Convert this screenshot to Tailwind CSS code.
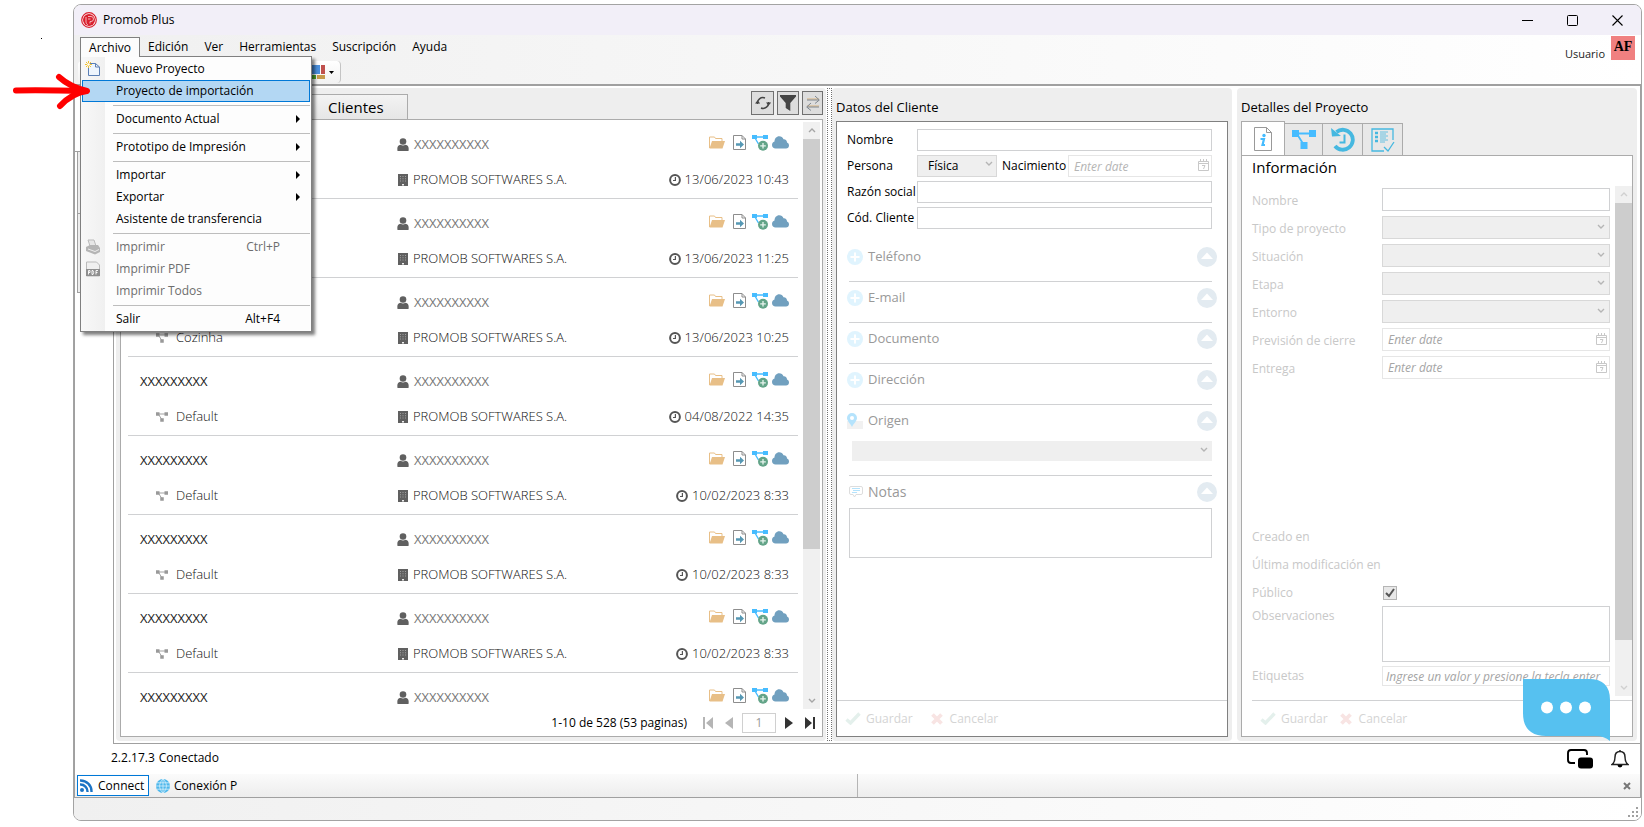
<!DOCTYPE html>
<html lang="es">
<head>
  <meta charset="UTF-8" />
  <meta name="viewport" content="width=device-width, initial-scale=1" />
  <title>Promob Plus</title>
  <script src="https://cdn.jsdelivr.net/npm/@tailwindcss/browser@4"></script>
</head>
<body class="bg-white h-screen overflow-hidden pl-[73px] pr-0.5 pt-1 pb-1.5 text-xs text-black font-['Open_Sans','Noto_Sans',sans-serif]">

  <!-- icon sprite -->
  <svg class="hidden">
    <symbol id="i-user" viewBox="0 0 12 13"><circle cx="6" cy="3.500" r="3.300"/><path d="M0.500 13c-.6-4 .2-6 3-6.300 1.500 1 3.500 1 5 0 2.800.3 3.600 2.300 3 6.300z"/></symbol>
    <symbol id="i-building" viewBox="0 0 10 12"><path d="M0 0h10v12H0z"/><path d="M2 2h1v1H2zM4.500 2h1v1h-1zM7 2h1v1H7zM2 4.200h1v1H2zM4.500 4.200h1v1h-1zM7 4.200h1v1H7zM2 6.400h1v1H2zM4.500 6.400h1v1h-1zM7 6.400h1v1H7z" fill="#a0a0a0"/><path d="M4 10h2v1.500H4z" fill="#eee"/></symbol>
    <symbol id="i-clock" viewBox="0 0 12 12"><circle cx="6" cy="6" r="4.900" fill="none" stroke="currentColor" stroke-width="2"/><path d="M6.400 3v3.500H4" fill="none" stroke="currentColor" stroke-width="1.200"/></symbol>
    <symbol id="i-folder" viewBox="0 0 16 13"><path d="M.5 12V1h5l1 1.500h6.500V5" fill="none" stroke="#e8bf87"/><path d="M3 5h13l-2.500 7.500H.5z" fill="#e8bf87"/></symbol>
    <symbol id="i-docarrow" viewBox="0 0 13 15"><path d="M.5.5h8.500l3.500 3.500v10.500H.5zM9 .5v3.500h3.500" fill="#fff" stroke="#8d8d8d"/><path d="M3 8.200h4V5.800L11 9.500 7 13.200v-2.400H3z" fill="#5698b4"/></symbol>
    <symbol id="i-net" viewBox="0 0 24 19"><path d="M3 3.500h18M5 4l7.500 12" fill="none" stroke="currentColor" stroke-width="1.800"/><path d="M0 0h7v7H0zM17 0h7v7h-7zM8.500 12h7v7h-7z"/></symbol>
    <symbol id="i-netadd" viewBox="0 0 16 16"><path d="M2 2h12M3 3l3.500 6" fill="none" stroke="#46bcff" stroke-width="1.400"/><path d="M0 0h5v4H0zM11 0h5v4h-5z" fill="#46bcff"/><circle cx="11" cy="10.800" r="5" fill="#63a488"/><path d="M11 8v5.600M8.200 10.800h5.600" stroke="#e8f4ee" stroke-width="1.300"/></symbol>
    <symbol id="i-cloud" viewBox="0 0 17 13"><path d="M3.500 12.500C1.500 12.500 0 11 0 9c0-1.700 1-3 2.500-3.400C2.500 2.600 4.500.3 7.200.3c2 0 3.600 1.200 4.300 3 2-.2 3.600 1.200 3.500 3.300 1.200.4 2 1.500 2 2.900 0 1.700-1.300 3-3 3z" fill="#71a0bf"/></symbol>
    <symbol id="i-down" viewBox="0 0 8 6"><path d="M1 1l3 3 3-3" fill="none" stroke="currentColor" stroke-width="1.400"/></symbol>
    <symbol id="i-up" viewBox="0 0 8 6"><path d="M1 5l3-3 3 3" fill="none" stroke="currentColor" stroke-width="1.400"/></symbol>
    <symbol id="i-cal" viewBox="0 0 11 12"><path d="M.5 2.500h10v9H.5zM.5 4.500h10M2.500 0v3M5.500 0v3M8.500 0v3M4 6.500h3l-1.500 3.500" fill="none" stroke="currentColor"/></symbol>
    <symbol id="i-plus" viewBox="0 0 16 16"><circle cx="8" cy="8" r="8" fill="#e0f4fe"/><path d="M8 3.500v9M3.500 8h9" stroke="#fff" stroke-width="2"/></symbol>
    <symbol id="i-fold" viewBox="0 0 20 20"><circle cx="10" cy="10" r="10" fill="#e3ebf1"/><path d="M10 5.500l6 6.500H4z" fill="#fff"/></symbol>
    <symbol id="i-check" viewBox="0 0 16 13"><path d="M1.500 7.500l4 3.500L14.500 1.500" fill="none" stroke="#e4f0ec" stroke-width="3.400"/></symbol>
    <symbol id="i-cross" viewBox="0 0 12 12"><path d="M1.500 1.500l9 9M10.500 1.500l-9 9" stroke="#f8e4e3" stroke-width="3.800"/></symbol>
  </svg>

  <div class="relative flex flex-col h-full border border-[#a3a3a3] rounded-lg overflow-hidden">

    <!-- title bar -->
    <header class="flex items-center h-[30px] shrink-0 pl-[7px] pr-px bg-[#f2eff8]">
      <svg class="w-4 h-4" viewBox="0 0 16 16"><circle cx="8" cy="8" r="7.300" fill="#fff" stroke="#d9202e" stroke-width="1.200"/><circle cx="8" cy="8" r="6" fill="#d9202e"/><path d="M7 4.500h3a2 2 0 010 5H9v2M5 5v5c0 1 1 2.500 2 3M7 7h2.500" fill="none" stroke="#f2b6ba" stroke-width="1"/></svg>
      <h1 class="ml-1.5 mr-auto">Promob Plus</h1>
      <button class="w-[45px] h-full flex items-center justify-center" aria-label="Minimizar"><svg class="w-[11px] h-[11px]" viewBox="0 0 11 11"><path d="M0 5.500h11" stroke="#000"/></svg></button>
      <button class="w-[45px] h-full flex items-center justify-center" aria-label="Maximizar"><svg class="w-[11px] h-[11px]" viewBox="0 0 11 11"><rect x=".5" y=".5" width="10" height="10" rx="1" fill="none" stroke="#000"/></svg></button>
      <button class="w-[45px] h-full flex items-center justify-center" aria-label="Cerrar"><svg class="w-[11px] h-[11px]" viewBox="0 0 11 11"><path d="M.5.5l10 10M10.500.5l-10 10" stroke="#000" stroke-width="1.100"/></svg></button>
    </header>

    <!-- menu bar and tool strip -->
    <div class="relative flex h-[51px] shrink-0 bg-linear-to-r from-[#f0f0f0] to-white border-b-2 border-[#a0a0a0]">
      <div class="flex flex-col">
        <nav class="flex h-[21px] pl-1.5 pt-0.5 leading-[18px]">
          <button class="relative z-30 h-5 w-[60px] border border-b-0 border-[#808080] bg-[#fcfcfc]">Archivo</button>
          <button class="px-2">Edición</button>
          <button class="px-2">Ver</button>
          <button class="px-2">Herramientas</button>
          <button class="px-2">Suscripción</button>
          <button class="px-2">Ayuda</button>
        </nav>
        <div class="flex items-center justify-end mt-[5px] ml-1 w-[263px] h-[22px] rounded bg-linear-to-b from-white to-[#f2f2f2] border-r border-[#c4c4c4]">
          <svg class="w-4 h-4" viewBox="0 0 16 16"><path d="M0 1h11v9H0z" fill="#4a8fdc"/><path d="M12 1h4v9h-4z" fill="#c0504d"/><path d="M0 11h7v4H0z" fill="#4ea72e"/><path d="M8 11h8v4H8z" fill="#c79a4b"/></svg>
          <svg class="w-[5px] h-[3px] ml-1 mr-1.5" viewBox="0 0 5 3"><path d="M0 0h5L2.500 3z"/></svg>
        </div>
      </div>
      <div class="ml-auto flex pt-px pr-1.5">
        <span class="text-[11px] mt-[11px] mr-1.5 text-[#222]">Usuario</span>
        <span class="w-6 h-6 bg-[#f08080] text-center font-bold text-sm leading-[22px] font-['Liberation_Serif',serif]">AF</span>
      </div>
    </div>

    <!-- workspace -->
    <main class="flex flex-1 min-h-0 border-x border-[#a0a0a0]">
      <aside class="w-[38px] shrink-0">
        <div class="h-[66px] border-b border-[#a0a0a0]"></div>
        <div class="ml-0.5 h-[62px] bg-[#eee] border-l border-b border-[#a0a0a0]"></div>
        <div class="ml-0.5 h-[79px] bg-[#eee] border-l border-b border-[#a0a0a0]"></div>
      </aside>

      <div class="flex flex-1 min-w-0 border-l border-b border-[#a0a0a0] pt-0.5 pb-0.5">

        <!-- project list -->
        <section class="flex flex-col flex-1 min-w-0 ml-0.5 pl-1 pr-[3px] pb-1 bg-[#eee] rounded">
          <div class="flex h-[31px] items-end">
            <button class="h-[25px] w-[172px] border border-b-0 border-[#a0a0a0] bg-white" aria-label="Proyectos"></button>
            <button class="h-[25px] w-[116px] pl-9 text-left border border-l-0 border-b-0 border-[#ababab] bg-linear-to-b from-[#f3f3f3] to-[#e6e6e6] text-[15px] leading-6">Clientes</button>
            <div class="ml-auto mb-1 flex gap-[3px]">
              <button class="w-[23px] h-6 flex items-center justify-center border border-[#707070] bg-[#ddd]" aria-label="Actualizar"><svg class="w-4 h-4" viewBox="0 0 16 16" fill="none" stroke="#444" stroke-width="1.500"><path d="M2.500 9A5.500 5.500 0 0110 3M13.500 7A5.500 5.500 0 016 13"/><path d="M0 8.500h5.200L2.600 5.300zM11 7.500h5.200L13.500 10.700z" fill="#444" stroke="none"/></svg></button>
              <button class="w-[22px] h-6 flex items-center justify-center border border-[#707070] bg-[#ddd]" aria-label="Filtrar"><svg class="w-4 h-4" viewBox="0 0 16 16"><path d="M0 0h16v1.500L10.300 8v8L5.700 13V8L0 1.500z" fill="#444"/></svg></button>
              <button class="w-[21px] h-6 flex items-center justify-center border border-[#707070] bg-[#ddd]" aria-label="Transferir"><svg class="w-3.5 h-4" viewBox="0 0 14 16" fill="none"><path d="M1 4h12M13 11H1" stroke="#d9b27c"/><path d="M1 5h12M9 1l4.300 4L9 8.500M13 12H1M5 8l-4.300 4L5 15.500" stroke="#808890"/></svg></button>
            </div>
          </div>
          <div class="flex flex-col flex-1 min-h-0 bg-white border border-[#ababab]">
            <div class="flex flex-1 min-h-0">
              <ul id="projects" class="flex-1 min-w-0 overflow-hidden pl-[7px]"></ul>
              <div class="flex flex-col items-center w-[17px] ml-[5px] mr-0.5 mt-0.5 bg-[#f0f0f0] text-[#a5a5a5]">
                <svg class="w-2 h-1.5 my-[5px]"><use href="#i-up"/></svg>
                <div class="w-full h-[410px] mt-px bg-[#cdcdcd]"></div>
                <svg class="w-2 h-1.5 mt-auto mb-[5px]"><use href="#i-down"/></svg>
              </div>
            </div>
            <div class="flex items-center justify-end h-[27px] shrink-0 pr-[7px]">
              <span class="mr-4">1-10 de 528 (53 paginas)</span>
              <button aria-label="Primera"><svg class="w-2.5 h-3" viewBox="0 0 10 12" fill="#b5b5b5"><path d="M0 0h2v12H0zM10 0v12L3 6z"/></svg></button>
              <button class="ml-3" aria-label="Anterior"><svg class="w-2 h-3" viewBox="0 0 8 12" fill="#b5b5b5"><path d="M8 0v12L0 6z"/></svg></button>
              <input class="mx-[9px] w-[34px] h-5 border border-[#d0d0d0] text-center text-[#999]" value="1" aria-label="Página" />
              <button aria-label="Siguiente"><svg class="w-2 h-3" viewBox="0 0 8 12" fill="#333"><path d="M0 0v12l8-6z"/></svg></button>
              <button class="ml-3" aria-label="Última"><svg class="w-2.5 h-3" viewBox="0 0 10 12" fill="#333"><path d="M8 0h2v12H8zM0 0v12l7-6z"/></svg></button>
            </div>
          </div>
        </section>

        <div class="w-[5px] ml-px border border-dotted border-[#707070]"></div>

        <!-- client data -->
        <section class="flex flex-col w-[400px] shrink-0 px-1 pb-1 bg-[#eee] rounded">
          <h2 class="h-[33px] pt-[9px] text-[13px] leading-5">Datos del Cliente</h2>
          <div class="flex flex-col flex-1 min-h-0 bg-white border border-[#808080]">
            <form class="grid grid-cols-[70px_1fr] gap-y-1 pl-2.5 pr-[15px] pt-[7px] items-center">
              <label for="c-name">Nombre</label>
              <input id="c-name" class="h-[22px] border border-[#d0d1d3]" />
              <label for="c-type">Persona</label>
              <div class="flex items-center">
                <div class="relative">
                  <select id="c-type" class="appearance-none w-20 h-[22px] pl-2.5 border border-[#d8d8d8] bg-[#efefef]"><option>Física</option></select>
                  <svg class="absolute right-1 top-1.5 w-2 h-1.5 text-[#b5b5b5]"><use href="#i-down"/></svg>
                </div>
                <label for="c-birth" class="w-[71px] pl-[5px]">Nacimiento</label>
                <div class="relative flex-1 min-w-0">
                  <input id="c-birth" class="w-full h-[22px] px-[5px] border border-[#e6e6e6] italic placeholder:text-[#b5b5b5]" placeholder="Enter date" />
                  <svg class="absolute right-[3px] top-1 w-[11px] h-3 text-[#c8c8c8]"><use href="#i-cal"/></svg>
                </div>
              </div>
              <label for="c-social" class="whitespace-nowrap">Razón social</label>
              <input id="c-social" class="h-[22px] border border-[#d0d1d3]" />
              <label for="c-code" class="whitespace-nowrap">Cód. Cliente</label>
              <input id="c-code" class="h-[22px] border border-[#d0d1d3]" />
            </form>
            <div class="pl-2.5 pr-[15px] pt-3 text-[13px] text-[#999]">
              <div id="sections"></div>
              <div class="ml-0.5 border-b border-[#d0d1d3] h-[71px]">
                <div class="flex items-center h-8 -ml-0.5 -mr-[5px]">
                  <svg class="w-4 h-4" viewBox="0 0 16 16"><path d="M0 8h16v8H0z" fill="#f1f1f1"/><path d="M5 0a5 5 0 015 5c0 3-3 5-5 9-2-4-5-6-5-9a5 5 0 015-5z" fill="#b5e3fc"/><circle cx="5" cy="5" r="2" fill="#fff"/></svg>
                  <label for="c-origin" class="ml-[5px] mr-auto">Origen</label>
                  <svg class="w-5 h-5"><use href="#i-fold"/></svg>
                </div>
                <div class="relative ml-[3px] mt-1">
                  <select id="c-origin" class="appearance-none w-full h-5 bg-[#efefef]"></select>
                  <svg class="absolute right-1 top-1.5 w-2 h-1.5 text-[#b5b5b5]"><use href="#i-down"/></svg>
                </div>
              </div>
              <div class="flex items-center h-8 -mr-[5px]">
                <svg class="w-3.5 h-3 ml-0.5" viewBox="0 0 14 12" fill="none"><path d="M2 .5h10q1.500 0 1.500 1.500v5q0 1.500-1.500 1.500H7L5.500 11 4 8.500H2Q.5 8.500.5 7V2Q.5.5 2 .5z" stroke="#ddd"/><path d="M3 2.500h8M4 4.500h7M3 6.500h5" stroke="#b5e3fc"/></svg>
                <label for="c-notes" class="ml-[5px] mr-auto text-sm">Notas</label>
                <svg class="w-5 h-5"><use href="#i-fold"/></svg>
              </div>
              <div class="flex ml-0.5"><textarea id="c-notes" class="w-full h-[50px] border border-[#d0d1d3] resize-none"></textarea></div>
            </div>
            <div class="flex items-center mt-auto h-9 pl-2 border-t border-[#d0d1d3] text-[#d4d4d4]">
              <button class="flex items-center"><svg class="w-4 h-[13px] mr-[5px]"><use href="#i-check"/></svg>Guardar</button>
              <button class="flex items-center ml-[18px]"><svg class="w-3 h-3 mr-[7px]"><use href="#i-cross"/></svg>Cancelar</button>
            </div>
          </div>
        </section>

        <!-- project details -->
        <section class="flex flex-col w-[400px] shrink-0 ml-[5px] mr-[3px] px-1 pb-1 bg-[#eee] rounded">
          <h2 class="h-[33px] pt-[9px] text-[13px] leading-5">Detalles del Proyecto</h2>
          <div class="flex items-end h-[34px]">
            <button class="flex items-center justify-center w-11 h-[34px] border border-b-0 border-[#ababab] bg-white" aria-label="Información"><svg class="w-[18px] h-6" viewBox="0 0 18 24"><path d="M.5.5h12l5 5v18H.5zM12.500.5v5h5" fill="#fff" stroke="#999"/><circle cx="10" cy="8.500" r="1.700" fill="#46bcff"/><path d="M6.500 12h3.500l-1.500 6h2.500" fill="none" stroke="#46bcff" stroke-width="2.200"/></svg></button>
            <button class="flex items-center justify-center w-[38px] h-8 border border-l-0 border-b-0 border-[#ababab] bg-[#e8e8e8] text-[#46bcff]" aria-label="Ambientes"><svg class="w-6 h-[19px] fill-current"><use href="#i-net"/></svg></button>
            <button class="flex items-center justify-center w-10 h-8 border border-l-0 border-b-0 border-[#ababab] bg-[#e8e8e8]" aria-label="Historial"><svg class="w-6 h-[25px]" viewBox="0 0 24 25" fill="none" stroke="#46b8e0"><path d="M5.500 5A10 10 0 114 19" stroke-width="3.800"/><path d="M0 1l1 8.500 9-.5z" fill="#46b8e0" stroke="none"/><path d="M13.500 7.500v8H8.500" stroke-width="2"/></svg></button>
            <button class="flex items-center justify-center w-10 h-8 border border-l-0 border-b-0 border-[#ababab] bg-[#e8e8e8]" aria-label="Lista"><svg class="w-6 h-6" viewBox="0 0 24 24" fill="none" stroke="#46b8e0" stroke-width="1.300"><path d="M22 12V1H1v22h12M13 19l4 4 6-9"/><path d="M4 5h3M4 9h3M4 13h3" stroke-width="2.400"/><path d="M9 4h8M9 6h6M9 8h8M9 10h6M9 12h8M9 14h5" stroke-width=".8"/></svg></button>
          </div>
          <div class="flex flex-col flex-1 min-h-0 bg-white border border-[#ababab]">
            <h3 class="h-[30px] shrink-0 pl-2.5 text-[15px] leading-[22px]">Información</h3>
            <div class="flex flex-1 min-h-0 mb-1">
              <form class="flex-1 min-w-0 overflow-hidden pl-2.5 pt-0.5 text-[#c8c8c8]">
                <div id="fields" class="flex flex-col gap-[5px]"></div>
                <p class="mt-[144px] h-7 leading-7">Creado en</p>
                <p class="h-7 leading-7">Última modificación en</p>
                <div class="flex items-center h-[27px]">
                  <label for="p-public" class="w-[131px]">Público</label>
                  <div class="relative w-3.5 h-3.5">
                    <input id="p-public" type="checkbox" checked class="appearance-none block w-3.5 h-3.5 border border-[#b5b5b5] bg-[#e8e8e8]" />
                    <svg class="absolute inset-0 w-3.5 h-3.5 pointer-events-none" viewBox="0 0 14 14"><path d="M3 7l3 3 5-7" fill="none" stroke="#555" stroke-width="2"/></svg>
                  </div>
                </div>
                <div class="flex">
                  <label for="p-obs" class="w-[130px] pt-0.5">Observaciones</label>
                  <textarea id="p-obs" class="flex-1 h-14 border border-[#d0d1d3] resize-none"></textarea>
                </div>
                <div class="flex items-center mt-1">
                  <label for="p-tags" class="w-[130px]">Etiquetas</label>
                  <input id="p-tags" class="flex-1 min-w-0 h-5 pl-[3px] border border-[#e6e6e6] italic placeholder:text-[#a5a5a5]" placeholder="Ingrese un valor y presione la tecla enter" />
                </div>
              </form>
              <div class="flex flex-col items-center w-[17px] ml-[5px] bg-[#f0f0f0] text-[#d0d0d0]">
                <svg class="w-2 h-1.5 my-[5px]"><use href="#i-up"/></svg>
                <div class="w-full h-[437px] mt-px bg-[#cdcdcd]"></div>
                <svg class="w-2 h-1.5 mt-auto mb-[5px]"><use href="#i-down"/></svg>
              </div>
            </div>
            <div class="flex items-center h-9 shrink-0 ml-2.5 pl-2 border-t border-[#d0d1d3] text-[#d4d4d4]">
              <button class="flex items-center"><svg class="w-4 h-[13px] mr-[5px]"><use href="#i-check"/></svg>Guardar</button>
              <button class="flex items-center ml-3"><svg class="w-3 h-3 mr-[7px]"><use href="#i-cross"/></svg>Cancelar</button>
            </div>
          </div>
        </section>
      </div>
    </main>

    <!-- status -->
    <div class="flex items-center h-[30px] shrink-0 pl-9 pr-[11px] border-x border-[#a0a0a0]">
      <span class="mr-1 pb-0.5">2.2.17.3</span>
      <span class="mr-auto pb-0.5">Conectado</span>
      <svg class="w-[26px] h-5" viewBox="0 0 26 20"><path d="M8 14H4q-3 0-3-3V4q0-3 3-3h13q3 0 3 3v2" fill="none" stroke="#000" stroke-width="1.900"/><rect x="11" y="8.500" width="15" height="11" rx="3"/></svg>
      <svg class="w-[18px] h-[18px] ml-[18px]" viewBox="0 0 18 18"><path d="M9 1.500c3.500 0 5 2.500 5 5.500 0 4 1 6 3 7.500H1C3 13 4 11 4 7c0-3 1.500-5.500 5-5.500zM9 0v1.500" fill="none" stroke="#222" stroke-width="1.500"/><path d="M6.500 15h5a2.500 2.500 0 01-5 0z"/></svg>
    </div>

    <!-- bottom tabs -->
    <div class="flex items-center h-6 shrink-0 bg-linear-to-b from-[#fbfbfb] to-[#ededed] border-x border-b border-[#a0a0a0]">
      <div class="flex items-center w-1/2 h-full pl-0.5 border-r border-[#b5b5b5]">
        <button class="flex items-center w-[72px] h-[21px] pl-0.5 border border-[#0078d7] bg-white">
          <svg class="w-[13px] h-[13px] mr-[5px]" viewBox="0 0 13 13" fill="none" stroke="#1c74c4"><circle cx="2" cy="11" r="2" fill="#1c74c4" stroke="none"/><path d="M0 5.500A7 7 0 017.500 13M0 1.500A11 11 0 0111.500 13" stroke-width="2.400"/></svg>Connect
        </button>
        <button class="flex items-center ml-[7px]">
          <svg class="w-3.5 h-3.5 mr-1" viewBox="0 0 14 14"><circle cx="7" cy="7" r="7" fill="#4fb8ec"/><path d="M0 7h14M1 3.800h12M1 10.200h12M7 0v14M7 0C2.500 4 2.500 10 7 14M7 0c4.500 4 4.500 10 0 14" fill="none" stroke="#d8f0fb" stroke-width=".8"/></svg>Conexión P
        </button>
      </div>
      <button class="ml-auto mr-[9px]" aria-label="Cerrar pestaña"><svg class="w-2 h-2" viewBox="0 0 8 8"><path d="M1 1l6 6M7 1L1 7" stroke="#777" stroke-width="2"/></svg></button>
    </div>
    <footer class="flex items-end justify-end h-[22px] shrink-0 p-0.5 bg-linear-to-r from-[#f0f0f0] to-white">
      <svg class="w-3 h-3" viewBox="0 0 12 12" fill="#a0a0a0"><path d="M9 1h2v2H9zM5 5h2v2H5zM9 5h2v2H9zM1 9h2v2H1zM5 9h2v2H5zM9 9h2v2H9z"/></svg>
    </footer>

    <!-- open Archivo menu -->
    <div id="menu" class="absolute z-20 left-1.5 top-[51px] w-[232px] p-px border border-[#808080] bg-linear-to-r from-[#f8f8f8] from-0% via-[#f0f0f0] via-[24px] to-[#fdfdfd] to-[24px] shadow-[3px_3px_3px_rgba(0,0,0,0.5)]"></div>

    <!-- chat bubble -->
    <button class="absolute z-20 right-[31px] bottom-[79px]" aria-label="Chat">
      <svg class="w-[87px] h-[62px]" viewBox="0 0 87 62"><path d="M0 0h66q21 0 21 21v41q-6-5-14-5H23Q0 57 0 34z" fill="#56c1f0"/><circle cx="24" cy="28.500" r="6" fill="#fff"/><circle cx="43" cy="28.500" r="6" fill="#fff"/><circle cx="62" cy="28.500" r="6" fill="#fff"/></svg>
    </button>
  </div>

  <!-- hand drawn arrow -->
  <svg class="absolute z-40 left-3 top-[72px] w-20 h-[38px]" viewBox="0 0 80 38" fill="none" stroke="#f00" stroke-width="6" stroke-linecap="round" stroke-linejoin="round"><path d="M4 18.500Q30 18 74 19"/><path d="M47 5Q58 15 75 19Q60 21 48 34"/></svg>
  <span class="absolute left-[41px] top-[38px] w-px h-px bg-black"></span>

  <script>
  const projects = [
    { name: "", env: "", date: "13/06/2023 10:43" },
    { name: "", env: "", date: "13/06/2023 11:25" },
    { name: "", env: "Cozinha", date: "13/06/2023 10:25" },
    { name: "XXXXXXXXX", env: "Default", date: "04/08/2022 14:35" },
    { name: "XXXXXXXXX", env: "Default", date: "10/02/2023 8:33" },
    { name: "XXXXXXXXX", env: "Default", date: "10/02/2023 8:33" },
    { name: "XXXXXXXXX", env: "Default", date: "10/02/2023 8:33" },
    { name: "XXXXXXXXX" }
  ];

  // the last row is only partly in view, its second line is left out
  document.getElementById("projects").innerHTML = projects.map(p => `
    <li class="pt-[7px] pl-3 pr-[9px] ${p.date ? "h-[79px] border-b border-[#d0d1d3]" : ""}">
      <div class="flex items-center h-[35px]">
        <span class="w-[257px] text-[13px] text-[#222]">${p.name}</span>
        <svg class="w-3 h-[13px] fill-[#606060]"><use href="#i-user"/></svg>
        <span class="ml-[5px] mr-auto text-[13px] text-[#777]">XXXXXXXXXX</span>
        <div class="flex items-center gap-1 pb-1">
          <button class="mr-1" aria-label="Abrir"><svg class="block w-4 h-[13px]"><use href="#i-folder"/></svg></button>
          <button class="mr-0.5" aria-label="Exportar"><svg class="block w-[13px] h-[15px]"><use href="#i-docarrow"/></svg></button>
          <button aria-label="Agregar ambiente"><svg class="block w-4 h-4"><use href="#i-netadd"/></svg></button>
          <button aria-label="Nube"><svg class="block w-[17px] h-[13px]"><use href="#i-cloud"/></svg></button>
        </div>
      </div>
      ${!p.date ? "" : `<div class="flex items-center h-[35px] text-[13px] font-light text-[#111]">
        <svg class="w-3 h-2.5 ml-4 fill-[#999] text-[#999]"><use href="#i-net"/></svg>
        <span class="w-[222px] ml-2">${p.env}</span>
        <svg class="w-2.5 h-3 fill-[#606060]"><use href="#i-building"/></svg>
        <span class="ml-[5px] mr-auto">PROMOB SOFTWARES S.A.</span>
        <svg class="w-3 h-3 text-[#555]"><use href="#i-clock"/></svg>
        <span class="ml-1">${p.date}</span>
      </div>`}
    </li>`).join("");

  document.getElementById("sections").innerHTML = ["Teléfono", "E-mail", "Documento", "Dirección"].map(s => `
    <div class="ml-0.5 border-b border-[#d0d1d3] h-[41px]">
      <div class="flex items-center h-8 -ml-0.5 -mr-[5px]">
        <svg class="w-4 h-4"><use href="#i-plus"/></svg>
        <span class="ml-[5px] mr-auto">${s}</span>
        <svg class="w-5 h-5"><use href="#i-fold"/></svg>
      </div>
    </div>`).join("");

  const fields = [
    ["Nombre", "text"], ["Tipo de proyecto", "select"], ["Situación", "select"], ["Etapa", "select"],
    ["Entorno", "select"], ["Previsión de cierre", "date"], ["Entrega", "date"]
  ];
  const controls = {
    text: id => `<input id="${id}" class="block w-full h-[23px] border border-[#d0d1d3]" />`,
    select: id => `<select id="${id}" class="block appearance-none w-full h-[23px] border border-[#d8d8d8] bg-[#efefef]"></select>
      <svg class="absolute right-[5px] top-2 w-2 h-1.5 text-[#b5b5b5]"><use href="#i-down"/></svg>`,
    date: id => `<input id="${id}" class="block w-full h-[23px] px-[5px] border border-[#e6e6e6] italic placeholder:text-[#a5a5a5]" placeholder="Enter date" />
      <svg class="absolute right-[3px] top-[5px] w-[11px] h-3 text-[#c8c8c8]"><use href="#i-cal"/></svg>`
  };
  document.getElementById("fields").innerHTML = fields.map(([label, type], i) => `
    <div class="flex items-center">
      <label for="p-${i}" class="w-[130px] pt-0.5">${label}</label>
      <div class="relative flex-1">${controls[type](`p-${i}`)}</div>
    </div>`).join("");

  const menuIcons = {
    nuevo: `<svg class="w-4 h-4" viewBox="0 0 16 16"><path d="M3.500 2.500h7l4 3.500v8.500h-11zM10.500 2.500V6h4" fill="#eef5fd" stroke="#5b7fb5"/><path d="M3.500 0v7M0 3.500h7M1 1l5 5M6 1L1 6" stroke="#f2c230"/><circle cx="3.500" cy="3.500" r="1.300" fill="#fff"/></svg>`,
    print: `<svg class="w-4 h-4" viewBox="0 0 16 16"><path d="M3 1h6l2 6H5z" fill="#e6e6e6" stroke="#bbb"/><path d="M1 8l4-2h8l2 3v4l-5 2.500L1 12z" fill="#b5b5b5"/><path d="M3 10l7 2.500 4-2" fill="none" stroke="#eee"/></svg>`,
    pdf: `<svg class="w-4 h-4" viewBox="0 0 16 16"><path d="M1.500 1h10l3 3v11h-13z" fill="#f0f0f0" stroke="#bbb"/><path d="M1 8h14v7H1z" fill="#8f8f8f"/><path d="M3.500 13.500v-4h1.500v2H3.500M7 9.500v4h1q1.300-2 0-4zM11 13.500v-4h2M11 11.500h1.500" fill="none" stroke="#fff" stroke-width=".9"/></svg>`
  };
  const menu = [
    { text: "Nuevo Proyecto", icon: "nuevo" },
    { text: "Proyecto de importación", active: true },
    null,
    { text: "Documento Actual", sub: true },
    null,
    { text: "Prototipo de Impresión", sub: true },
    null,
    { text: "Importar", sub: true },
    { text: "Exportar", sub: true },
    { text: "Asistente de transferencia" },
    null,
    { text: "Imprimir", key: "Ctrl+P", icon: "print", off: true },
    { text: "Imprimir PDF", icon: "pdf", off: true },
    { text: "Imprimir Todos", off: true },
    null,
    { text: "Salir", key: "Alt+F4" }
  ];
  document.getElementById("menu").innerHTML = menu.map(m => !m
    ? `<div class="h-1.5 pt-[3px] pl-[31px]"><div class="h-px bg-[#bdbdbd]"></div></div>`
    : `<button class="flex items-center w-full h-[22px] pl-0.5 border ${m.active ? "border-[#0078d7] bg-[#b3d7f3]" : "border-transparent"} ${m.off ? "text-[#6d6d6d]" : ""}">
        <span class="w-[31px]">${m.icon ? menuIcons[m.icon] : ""}</span>
        <span class="mr-auto">${m.text}</span>
        ${m.key ? `<span class="mr-[29px]">${m.key}</span>` : ""}
        ${m.sub ? `<svg class="w-1 h-2 mr-[9px]" viewBox="0 0 4 8"><path d="M0 0l4 4-4 4z"/></svg>` : ""}
      </button>`).join("");
  </script>
</body>
</html>
